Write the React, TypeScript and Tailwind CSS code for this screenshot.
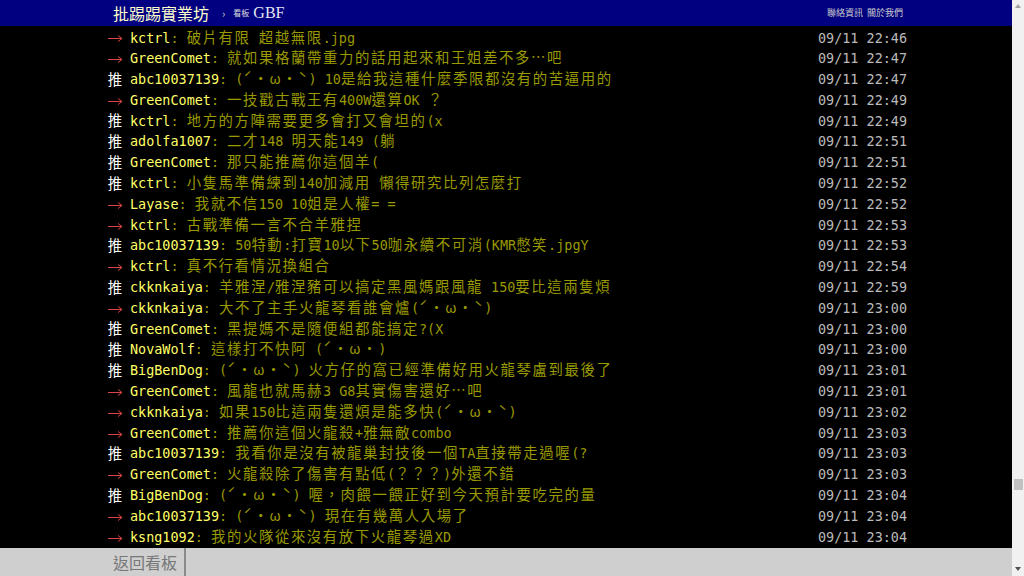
const rows: [string, string, string, string][] = [
  ["→", "kctrl", "破片有限 超越無限.jpg", "09/11 22:46"],
  ["→", "GreenComet", "就如果格蘭帶重力的話用起來和王姐差不多…吧", "09/11 22:47"],
  ["推", "abc10037139", "(ˊ・ω・ˋ) 10是給我這種什麼季限都沒有的苦逼用的", "09/11 22:47"],
  ["→", "GreenComet", "一技戳古戰王有400W還算OK ？", "09/11 22:49"],
  ["推", "kctrl", "地方的方陣需要更多會打又會坦的(x", "09/11 22:49"],
  ["推", "adolfa1007", "二才148 明天能149 (躺", "09/11 22:51"],
  ["推", "GreenComet", "那只能推薦你這個羊(", "09/11 22:51"],
  ["推", "kctrl", "小隻馬準備練到140加減用 懶得研究比列怎麼打", "09/11 22:52"],
  ["→", "Layase", "我就不信150 10姐是人權= =", "09/11 22:52"],
  ["→", "kctrl", "古戰準備一言不合羊雅捏", "09/11 22:53"],
  ["推", "abc10037139", "50特動:打寶10以下50咖永續不可消(KMR憋笑.jpgY", "09/11 22:53"],
  ["→", "kctrl", "真不行看情況換組合", "09/11 22:54"],
  ["推", "ckknkaiya", "羊雅涅/雅涅豬可以搞定黑風媽跟風龍 150要比這兩隻煩", "09/11 22:59"],
  ["→", "ckknkaiya", "大不了主手火龍琴看誰會爐(ˊ・ω・ˋ)", "09/11 23:00"],
  ["推", "GreenComet", "黑提媽不是隨便組都能搞定?(X", "09/11 23:00"],
  ["推", "NovaWolf", "這樣打不快阿 (ˊ・ω・)", "09/11 23:00"],
  ["推", "BigBenDog", "(ˊ・ω・ˋ) 火方仔的窩已經準備好用火龍琴盧到最後了", "09/11 23:01"],
  ["→", "GreenComet", "風龍也就馬赫3 G8其實傷害還好…吧", "09/11 23:01"],
  ["→", "ckknkaiya", "如果150比這兩隻還煩是能多快(ˊ・ω・ˋ)", "09/11 23:02"],
  ["→", "GreenComet", "推薦你這個火龍殺+雅無敵combo", "09/11 23:03"],
  ["推", "abc10037139", "我看你是沒有被龍巢封技後一個TA直接帶走過喔(?", "09/11 23:03"],
  ["→", "GreenComet", "火龍殺除了傷害有點低(？？？)外還不錯", "09/11 23:03"],
  ["推", "BigBenDog", "(ˊ・ω・ˋ) 喔，肉餵一餵正好到今天預計要吃完的量", "09/11 23:04"],
  ["→", "abc10037139", "(ˊ・ω・ˋ) 現在有幾萬人入場了", "09/11 23:04"],
  ["→", "ksng1092", "我的火隊從來沒有放下火龍琴過XD", "09/11 23:04"],
];

// half-width runs: monospace, ~8.1px a cell; full-width runs: CJK font padded to 16px a cell
function Mixed({ text }: { text: string }) {
  const parts = text.split(/([\x20-\x7e]+)/).filter((p) => p !== "");
  return (
    <>
      {parts.map((p, i) =>
        /^[\x20-\x7e]+$/.test(p) ? (
          <span key={i} className="inline-block whitespace-pre font-['DejaVu_Sans_Mono',monospace] text-[13.45px] leading-[20.8px]">
            {p}
          </span>
        ) : (
          <span
            key={i}
            className="inline-block font-['Noto_Sans_CJK_TC',sans-serif] text-[14.4px] leading-[20.8px] tracking-[1.6px]"
          >
            {p}
          </span>
        )
      )}
    </>
  );
}

function Arrow() {
  return (
    <svg width="16" height="10" viewBox="0 0 16 10" className="mt-[2px]">
      <path d="M1 5.5 H15 M11 2.5 L15 5.5 L11 8.5" fill="none" stroke="#d94444" strokeWidth="1" />
    </svg>
  );
}

function PushRow({ tag, user, content, time }: { tag: string; user: string; content: string; time: string }) {
  return (
    <div className="flex h-[20.8px] items-center whitespace-nowrap leading-[20.8px]">
      <span className="flex w-[16px] justify-center text-white">
        {tag === "推" ? (
          <span className="inline-block font-['Noto_Sans_CJK_TC',sans-serif] text-[14.4px] leading-[20.8px]">推</span>
        ) : (
          <Arrow />
        )}
      </span>
      <span className="ml-[7px] text-[#ff6]">
        <Mixed text={user} />
      </span>
      <span className="text-[#990]">
        <Mixed text={": " + content} />
      </span>
      <span className="ml-auto text-[#bbb]">
        <Mixed text={time} />
      </span>
    </div>
  );
}

export default function App() {
  return (
    <div className="flex h-[576px] w-[1024px] overflow-hidden bg-black font-['Noto_Sans_CJK_TC',sans-serif]">
      <div className="flex flex-1 flex-col">
        {/* top bar */}
        <div className="flex h-[26px] items-center bg-[#000080] pl-[113px] pr-[109px]">
          <span className="text-[16px] text-[#ffffcc]">批踢踢實業坊</span>
          <span className="ml-[13px] text-[11px] text-[#ccc]">›</span>
          <span className="ml-[8px] text-[8px] text-[#ddd]">看板</span>
          <span className="ml-[4px] font-['Liberation_Serif',serif] text-[16px] text-[#e4e4f4]">GBF</span>
          <div className="ml-auto flex gap-[4px] text-[9px] text-[#ccc]">
            <span>聯絡資訊</span>
            <span>關於我們</span>
          </div>
        </div>

        {/* pushes */}
        <div className="flex-1 pt-[1px]">
          <div className="ml-[107px] w-[800px]">
            {rows.map(([tag, user, content, time], i) => (
              <PushRow key={i} tag={tag} user={user} content={content} time={time} />
            ))}
          </div>
        </div>

        {/* bottom nav */}
        <div className="flex h-[28px] bg-[#cfcfcf]">
          <div className="ml-[100px] flex w-[86px] items-center border-r-2 border-[#8a8a8a] pl-[13px] text-[16px] text-[#777]">
            返回看板
          </div>
        </div>
      </div>

      {/* scrollbar */}
      <div className="flex w-[12px] flex-col items-center bg-[#f1f1f1]">
        <svg width="8" height="8" viewBox="0 0 8 8" className="mt-[2px]">
          <path d="M1 6 L4 2 L7 6 Z" fill="#a3a3a3" />
        </svg>
        <div className="mt-[469px] h-[11px] w-[9px] bg-[#c1c1c1]" />
        <div className="flex-1" />
        <svg width="8" height="8" viewBox="0 0 8 8" className="mb-[3px]">
          <path d="M1 2 L4 6 L7 2 Z" fill="#505050" />
        </svg>
      </div>
    </div>
  );
}
